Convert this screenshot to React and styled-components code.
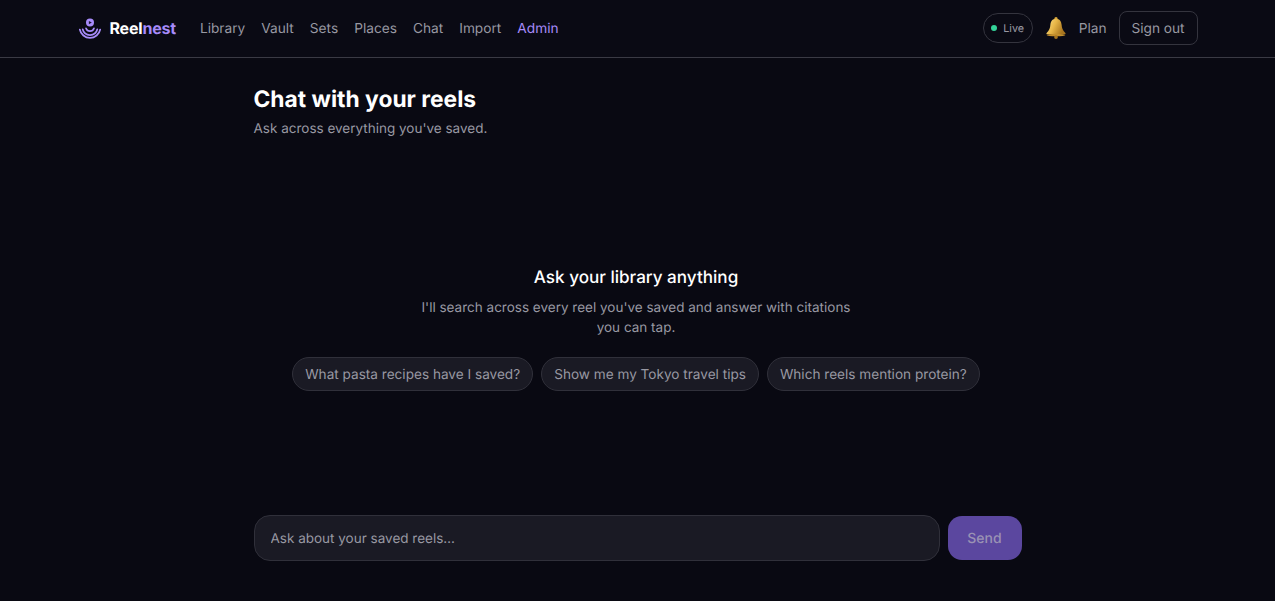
import React from 'react';
import styled, { createGlobalStyle } from 'styled-components';

const Global = createGlobalStyle`
  html, body { margin: 0; padding: 0; height: 100%; background: #090912; }
  body { font-family: Inter, "Liberation Sans", sans-serif; color: #fff; overflow: hidden; }
  #root { height: 100%; }
  * { box-sizing: border-box; text-rendering: geometricPrecision; }
`;

const Page = styled.div`
  height: 601px;
  display: flex;
  flex-direction: column;
`;

const Header = styled.header`
  height: 58px;
  flex: none;
  padding-bottom: 1px;
  background: #0a0a14;
  border-bottom: 1px solid #3a3a44;
`;

const HeaderInner = styled.div`
  width: 1120px;
  height: 100%;
  margin: 0 auto;
  display: flex;
  align-items: center;
  justify-content: space-between;
`;

const Left = styled.div`
  display: flex;
  align-items: center;
  gap: 24px;
`;

const Logo = styled.div`
  display: flex;
  align-items: center;
  gap: 8px;
  font-size: 16px;
  font-weight: 700;
  letter-spacing: -0.2px;
  color: #fff;
  span { color: #a78bfa; }
`;

const Nav = styled.nav`
  display: flex;
  gap: 16px;
`;

const NavLink = styled.a`
  padding-top: 2px;
  font-size: 13.7px;
  line-height: 20px;
  color: ${p => (p.$accent ? '#a78bfa' : '#9898a2')};
`;

const Right = styled.div`
  display: flex;
  align-items: center;
`;

const LivePill = styled.div`
  height: 30px;
  width: 50px;
  display: flex;
  align-items: center;
  justify-content: center;
  gap: 6px;
  border: 1px solid #34343e;
  border-radius: 15px;
  font-size: 10.8px;
  color: #9898a2;
  margin-right: 12px;
`;

const Dot = styled.i`
  width: 6px;
  height: 6px;
  border-radius: 50%;
  background: #34d399;
`;

const Plan = styled.a`
  padding-top: 2px;
  font-size: 13.7px;
  color: #9898a2;
  margin: 0 12px;
`;

const SignOut = styled.button`
  height: 34px;
  width: 79px;
  padding: 2px 0 0;
  background: transparent;
  border: 1px solid #34343e;
  border-radius: 8px;
  font: 13.7px Inter, "Liberation Sans", sans-serif;
  color: #9898a2;
`;

const Main = styled.main`
  width: 768px;
  margin: 0 auto;
  flex: 1;
  display: flex;
  flex-direction: column;
  padding: 26px 0 40px;
  min-height: 0;
`;

const Title = styled.h1`
  margin: 0;
  font-size: 22.8px;
  line-height: 32px;
  font-weight: 700;
  color: #fff;
`;

const Subtitle = styled.p`
  margin: 3px 0 0;
  font-size: 13.5px;
  line-height: 20px;
  color: #9898a2;
`;

const Empty = styled.section`
  flex: 1;
  display: flex;
  flex-direction: column;
  align-items: center;
  justify-content: center;
  padding-right: 3px;
  text-align: center;
`;

const EmptyTitle = styled.h2`
  margin: 0;
  font-size: 17.1px;
  line-height: 28px;
  font-weight: 500;
  color: #fff;
`;

const EmptyText = styled.p`
  margin: 6px 0 0;
  width: 448px;
  font-size: 13.5px;
  line-height: 20px;
  color: #9898a2;
`;

const Chips = styled.div`
  display: flex;
  gap: 8px;
  margin-top: 19px;
`;

const Chip = styled.button`
  height: 34px;
  padding: 2px 12px 0;
  background: #1a1a24;
  border: 1px solid #30303a;
  border-radius: 17px;
  font: 13.6px Inter, "Liberation Sans", sans-serif;
  color: #9898a2;
`;

const Composer = styled.form`
  display: flex;
  align-items: center;
  gap: 8px;
`;

const Field = styled.input`
  flex: 1;
  height: 46px;
  padding: 2px 16px 0;
  background: #1a1a24;
  border: 1px solid #30303a;
  border-radius: 16px;
  font: 13.5px Inter, "Liberation Sans", sans-serif;
  color: #fff;
  outline: none;
  &::placeholder { color: #9898a2; opacity: 1; }
`;

const Send = styled.button`
  width: 74px;
  height: 44px;
  padding: 0;
  background: #5b479f;
  border: none;
  border-radius: 14px;
  font: 500 14px Inter, "Liberation Sans", sans-serif;
  color: #9a92b4;
`;

const LogoMark = () => (
  <svg width="24" height="24" viewBox="0 0 24 24" fill="none">
    <circle cx="12" cy="6.600" r="4" fill="#a78bfa" />
    <path d="M10.900 5 13.800 6.600 10.900 8.200z" fill="#1b1530" />
    <g stroke="#a78bfa" strokeWidth="1.700" strokeLinecap="round">
      <path d="M8 12.300A4.200 4.200 0 0 0 16 12.300" />
      <path d="M4.700 13.300A7.500 7.500 0 0 0 19.300 13.300" />
      <path d="M1.800 13.500A10.400 10.400 0 0 0 22.200 13.500" />
    </g>
  </svg>
);

const Bell = () => (
  <svg width="22" height="22" viewBox="1.500 1 19 20">
    <defs>
      <linearGradient id="bell" x1="0" y1="0" x2="1" y2="0.400">
        <stop offset="0" stopColor="#fbe08a" />
        <stop offset="0.500" stopColor="#e8b748" />
        <stop offset="1" stopColor="#a9761f" />
      </linearGradient>
    </defs>
    <circle cx="11" cy="2.600" r="1.500" fill="#d9a63a" />
    <path d="M11 2.500c-3.400 0-4.900 2.600-5.100 5.600-.2 3-.9 5-3.400 7.400-.5.5-.2 1.200.5 1.200h16c.7 0 1-.7.5-1.200-2.500-2.400-3.200-4.400-3.400-7.400C15.900 5.100 14.400 2.500 11 2.500z" fill="url(#bell)" />
    <ellipse cx="11" cy="17.400" rx="8.500" ry="1.100" fill="#c48f2c" />
    <circle cx="11" cy="19.200" r="1.700" fill="#a9761f" />
  </svg>
);

const links = ['Library', 'Vault', 'Sets', 'Places', 'Chat', 'Import'];
const prompts = ['What pasta recipes have I saved?', 'Show me my Tokyo travel tips', 'Which reels mention protein?'];

export default function App() {
  return (
    <Page>
      <Global />
      <Header>
        <HeaderInner>
          <Left>
            <Logo>
              <LogoMark />
              <div>Reel<span>nest</span></div>
            </Logo>
            <Nav>
              {links.map(l => <NavLink key={l}>{l}</NavLink>)}
              <NavLink $accent>Admin</NavLink>
            </Nav>
          </Left>
          <Right>
            <LivePill><Dot />Live</LivePill>
            <Bell />
            <Plan>Plan</Plan>
            <SignOut>Sign out</SignOut>
          </Right>
        </HeaderInner>
      </Header>
      <Main>
        <Title>Chat with your reels</Title>
        <Subtitle>Ask across everything you've saved.</Subtitle>
        <Empty>
          <EmptyTitle>Ask your library anything</EmptyTitle>
          <EmptyText>I'll search across every reel you've saved and answer with citations you can tap.</EmptyText>
          <Chips>
            {prompts.map(p => <Chip key={p} type="button">{p}</Chip>)}
          </Chips>
        </Empty>
        <Composer>
          <Field placeholder="Ask about your saved reels…" />
          <Send type="button">Send</Send>
        </Composer>
      </Main>
    </Page>
  );
}
